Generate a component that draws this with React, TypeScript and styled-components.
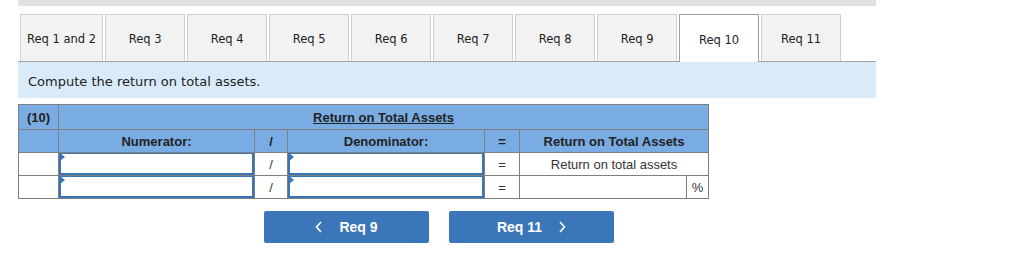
import styled, { createGlobalStyle } from 'styled-components';

export default App;

const tabs = ['Req 1 and 2', 'Req 3', 'Req 4', 'Req 5', 'Req 6', 'Req 7', 'Req 8', 'Req 9', 'Req 10', 'Req 11'];
const activeTab = 'Req 10';

function App() {
   return (
      <>
         <GlobalStyle />
         <Page>
            <TopBar />
            <TabList>
               {tabs.map((tab) => (
                  <Tab key={tab} $active={tab === activeTab}>
                     {tab}
                  </Tab>
               ))}
            </TabList>
            <Instructions>Compute the return on total assets.</Instructions>

            <Table>
               <colgroup>
                  <col style={{ width: 40 }} />
                  <col style={{ width: 196 }} />
                  <col style={{ width: 33 }} />
                  <col style={{ width: 197 }} />
                  <col style={{ width: 35 }} />
                  <col style={{ width: 167 }} />
                  <col style={{ width: 22 }} />
               </colgroup>
               <tbody>
                  <HeadRow>
                     <HeadCell $tall>(10)</HeadCell>
                     <HeadCell $tall colSpan={6}>
                        <Underlined>Return on Total Assets</Underlined>
                     </HeadCell>
                  </HeadRow>
                  <HeadRow>
                     <HeadCell />
                     <HeadCell>Numerator:</HeadCell>
                     <HeadCell>/</HeadCell>
                     <HeadCell>Denominator:</HeadCell>
                     <HeadCell>=</HeadCell>
                     <HeadCell colSpan={2}>Return on Total Assets</HeadCell>
                  </HeadRow>
                  <BodyRow>
                     <Cell />
                     <InputCell>
                        <EntryBox />
                     </InputCell>
                     <Cell>/</Cell>
                     <InputCell>
                        <EntryBox />
                     </InputCell>
                     <Cell>=</Cell>
                     <Cell colSpan={2}>Return on total assets</Cell>
                  </BodyRow>
                  <BodyRow>
                     <Cell />
                     <InputCell>
                        <EntryBox />
                     </InputCell>
                     <Cell>/</Cell>
                     <InputCell>
                        <EntryBox />
                     </InputCell>
                     <Cell>=</Cell>
                     <Cell />
                     <Cell>%</Cell>
                  </BodyRow>
               </tbody>
            </Table>

            <NavRow>
               <NavButton>
                  <Chevron viewBox='0 0 8 12'>
                     <path d='M6 1 L1.5 6 L6 11' />
                  </Chevron>
                  Req 9
               </NavButton>
               <NavButton>
                  Req 11
                  <Chevron viewBox='0 0 8 12'>
                     <path d='M2 1 L6.5 6 L2 11' />
                  </Chevron>
               </NavButton>
            </NavRow>
         </Page>
      </>
   );
}

const GlobalStyle = createGlobalStyle`
   body {
      margin: 0;
      background: #fff;
   }
`;

const Page = styled.div`
   padding-left: 18px;
   width: 858px;
`;

const TopBar = styled.div`
   height: 6px;
   background: #e1e1e1;
`;

const TabList = styled.div`
   display: flex;
   gap: 2px;
   margin-top: 8px;
   padding-left: 2px;
   border-bottom: 1px solid #a3a3a3;
   height: 47px;
`;

const Tab = styled.div<{ $active?: boolean }>`
   box-sizing: border-box;
   min-width: 80px;
   height: ${({ $active }) => ($active ? '48px' : '47px')};
   padding: 2px 6px 0;
   display: flex;
   align-items: center;
   justify-content: center;
   font-family: 'DejaVu Sans', Verdana, sans-serif;
   font-size: 11.5px;
   color: #222;
   background: ${({ $active }) => ($active ? '#fff' : '#f2f2f2')};
   border: 1px solid ${({ $active }) => ($active ? '#9c9c9c' : '#cfcfcf')};
   border-bottom: none;
`;

const Instructions = styled.div`
   height: 36px;
   box-sizing: border-box;
   padding: 12px 0 0 10px;
   background: #d9ebf9;
   font-family: 'DejaVu Sans', Verdana, sans-serif;
   font-size: 13px;
   color: #222;
`;

const Table = styled.table`
   margin-top: 6px;
   width: 690px;
   border-collapse: collapse;
   table-layout: fixed;
   font-family: 'Liberation Sans', Arial, sans-serif;
   font-size: 13px;
   color: #333;
`;

const HeadRow = styled.tr`
   background: #78ace3;
`;

const BodyRow = styled.tr`
   background: #fff;
`;

const HeadCell = styled.td<{ $tall?: boolean }>`
   border: 1px solid #7f7f7f;
   height: ${({ $tall }) => ($tall ? '24px' : '22px')};
   padding: 0;
   text-align: center;
   font-weight: bold;
   color: #222;
`;

const Underlined = styled.span`
   text-decoration: underline;
`;

const Cell = styled.td`
   border: 1px solid #7f7f7f;
   height: 22px;
   padding: 0;
   text-align: center;
`;

const InputCell = styled(Cell)`
   padding: 0;
`;

const EntryBox = styled.div`
   position: relative;
   box-sizing: border-box;
   height: 22px;
   border: 2px solid #3a74b8;
   border-top-width: 1px;
   background: #fff;

   &::before {
      content: '';
      position: absolute;
      left: -1px;
      top: -1px;
      border-left: 5px solid #3a74b8;
      border-top: 4px solid transparent;
      border-bottom: 4px solid transparent;
   }
`;

const NavRow = styled.div`
   display: flex;
   gap: 20px;
   margin: 12px 0 0 246px;
`;

const NavButton = styled.button`
   width: 165px;
   height: 32px;
   display: flex;
   align-items: center;
   justify-content: center;
   gap: 16px;
   border: none;
   border-radius: 2px;
   background: #3a76b8;
   color: #fff;
   font-family: 'Liberation Sans', Arial, sans-serif;
   font-size: 14px;
   font-weight: bold;
`;

const Chevron = styled.svg`
   width: 8px;
   height: 12px;
   fill: none;
   stroke: #fff;
   stroke-width: 1.6;
`;
